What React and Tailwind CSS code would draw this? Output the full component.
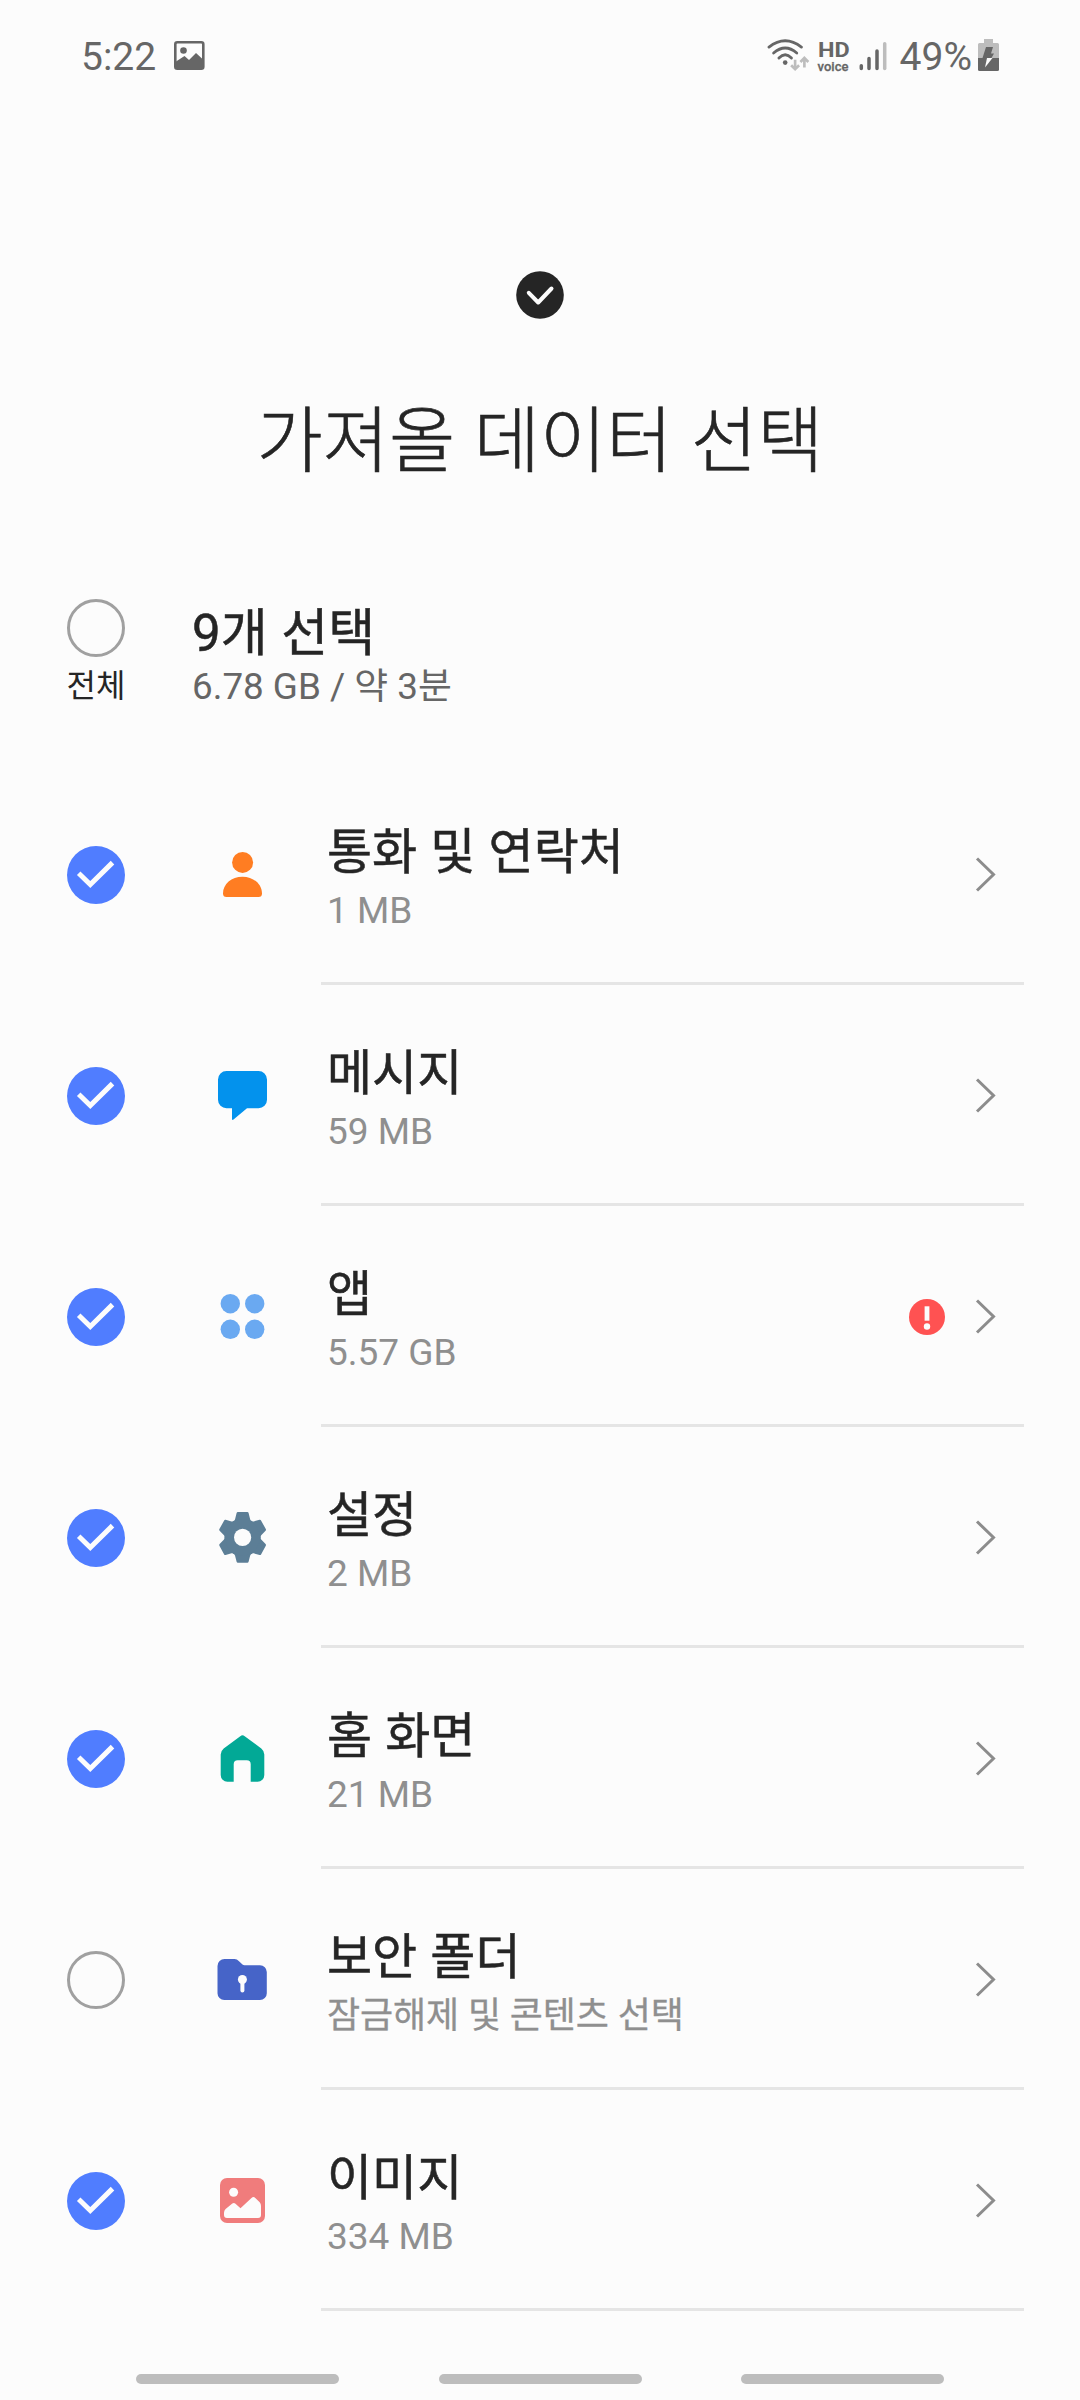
import React from 'react';

const PersonIcon = () => (
  <svg viewBox="0 0 60 60" className="w-[60px] h-[60px]" fill="#ff7d22">
    <circle cx="30.6" cy="17.4" r="10.5" />
    <path d="M11 48.5C11 39 19.5 31.7 30.5 31.7S50 39 50 48.5A3.5 3.5 0 0 1 46.5 52h-32a3.5 3.5 0 0 1-3.5-3.5z" />
  </svg>
);

const MessageIcon = () => (
  <svg viewBox="0 0 60 60" className="w-[60px] h-[60px]" fill="#0392ed">
    <path d="M14.5 5h32a8.5 8.5 0 0 1 8.5 8.5v20.3a8.5 8.5 0 0 1-8.5 8.5H35L21.5 53.6Q20 54.6 20 53V42.3h-5.5A8.5 8.5 0 0 1 6 33.8V13.5A8.5 8.5 0 0 1 14.5 5z" />
  </svg>
);

const AppsIcon = () => (
  <svg viewBox="0 0 60 60" className="w-[60px] h-[60px]" fill="#6aa9f1">
    <circle cx="18.3" cy="16.7" r="9.7" />
    <circle cx="42.7" cy="16.7" r="9.7" />
    <circle cx="18.3" cy="42.3" r="9.7" />
    <circle cx="42.7" cy="42.3" r="9.7" />
  </svg>
);

const GearIcon = () => (
  <svg viewBox="0 0 60 60" className="w-[60px] h-[60px]" fill="#5c7e96">
    <g transform="translate(30.6 29.4) scale(0.95 1)">
      {[0, 60, 120, 180, 240, 300].map((angle) => (
        <path
          key={angle}
          transform={`rotate(${angle})`}
          d="M-5-25.3H5Q6-25.3 6.3-24.3L8-18Q8.6-16.6 10.2-16L6-8H-6L-10.2-16Q-8.6-16.6-8-18L-6.3-24.3Q-6-25.3-5-25.3z"
        />
      ))}
      <circle r="18.3" />
    </g>
    <circle cx="30.6" cy="29.4" r="8.6" fill="#fcfcfc" />
  </svg>
);

const HomeIcon = () => (
  <svg viewBox="0 0 60 60" className="w-[60px] h-[60px]" fill="#02a996">
    <path d="M28.3 7.2Q30.5 5.2 32.7 7.2L49.3 19.5Q52.3 22 52.3 25.5V46a6.7 6.7 0 0 1-6.7 6.7H38.7V35.3a4 4 0 0 0-4-4h-9a4 4 0 0 0-4 4V52.7H15.4A6.7 6.7 0 0 1 8.7 46V25.5Q8.7 22 11.7 19.5z" />
  </svg>
);

const FolderIcon = () => (
  <svg viewBox="0 0 60 60" className="w-[60px] h-[60px]">
    <path
      fill="#4664c8"
      d="M12.5 9h10Q25 9 27 11.2L30.5 14.6Q31.3 15.3 32.5 15.3H48a6.8 6.8 0 0 1 6.8 6.8V43.2A6.8 6.8 0 0 1 48 50H12.3A6.8 6.8 0 0 1 5.5 43.2V16a7 7 0 0 1 7-7z"
    />
    <circle cx="30.4" cy="29.5" r="4.5" fill="#fcfcfc" />
    <path d="M30.4 30v10.5" stroke="#fcfcfc" strokeWidth="4" strokeLinecap="round" />
  </svg>
);

const ImageIcon = () => (
  <svg viewBox="0 0 60 60" className="w-[60px] h-[60px]">
    <rect x="8" y="7" width="45" height="45" rx="7" fill="#f07c7c" />
    <circle cx="21.6" cy="21.3" r="4.5" fill="#fcfcfc" />
    <path
      fill="#fcfcfc"
      d="M12 42Q12 39.5 13.6 38L20.3 32.5Q22 31.2 23.5 32.8L28.5 37.3 39.5 27Q41.5 25.2 43.3 27L47.7 31.3Q49 32.8 49 35V44a3 3 0 0 1-3 3H15a3 3 0 0 1-3-3z"
    />
  </svg>
);

const items = [
  { title: '통화 및 연락처', detail: '1 MB', Icon: PersonIcon, checked: true },
  { title: '메시지', detail: '59 MB', Icon: MessageIcon, checked: true },
  { title: '앱', detail: '5.57 GB', Icon: AppsIcon, checked: true, alert: true },
  { title: '설정', detail: '2 MB', Icon: GearIcon, checked: true },
  { title: '홈 화면', detail: '21 MB', Icon: HomeIcon, checked: true },
  { title: '보안 폴더', detail: '잠금해제 및 콘텐츠 선택', Icon: FolderIcon, checked: false, locked: true },
  { title: '이미지', detail: '334 MB', Icon: ImageIcon, checked: true },
];

const Checkbox = ({ checked }) => {
  if (!checked) {
    return <div className="w-[58px] h-[58px] shrink-0 rounded-full border-3 border-[#a0a0a0]" />;
  }

  return (
    <svg viewBox="0 0 58 58" className="w-[58px] h-[58px] shrink-0">
      <circle cx="29" cy="29" r="29" fill="#507dff" />
      <path d="M11.7 27.3l11.6 11.3L45.5 16.6" fill="none" stroke="#fcfcfc" strokeWidth="5" />
    </svg>
  );
};

const AlertIcon = () => (
  <svg viewBox="0 0 36 36" className="w-9 h-9">
    <circle cx="18" cy="18" r="18" fill="#ff5252" />
    <path d="M15.6 7.3h4.8v14.4h-4.8z" fill="#fcfcfc" />
    <circle cx="18" cy="27.5" r="3.2" fill="#fcfcfc" />
  </svg>
);

const Chevron = () => (
  <svg viewBox="0 0 22 36" className="w-[22px] h-9" fill="none" stroke="#8c8c8c" strokeWidth="3">
    <path d="M2 1.5L18.5 17.5 2 33.5" />
  </svg>
);

const StatusBar = () => (
  <header className="h-[112px] shrink-0 flex items-start pl-[81px] pr-[81px] pt-[34px] text-[#666666]">
    <span className="text-[39px] leading-[46px]">5:22</span>
    <svg viewBox="0 0 31 29" className="w-[31px] h-[29px] ml-[18px] mt-[7px]">
      <rect x="1.3" y="1.3" width="28" height="26.4" rx="2" fill="none" stroke="#666666" strokeWidth="2.6" />
      <circle cx="9.5" cy="9.5" r="3.3" fill="#666666" />
      <path d="M2 20.5L10.5 15l4.5 4L22 12l7 6.5V27H2z" fill="#666666" />
    </svg>

    <div className="ml-auto flex items-start">
      <svg viewBox="48 50 136 105" className="w-[45px] h-[35px] mt-[3px]" fill="none">
        <g stroke="#666666" strokeWidth="8.5" strokeLinecap="round">
          <path d="M57 80Q106 42 155 80" />
          <path d="M71 98Q106 68 141 98" />
          <path d="M87 113Q106 94 125 113" />
        </g>
        <circle cx="106" cy="127" r="7" fill="#666666" />
        <g stroke="#bdbdbd" strokeWidth="8">
          <path d="M136 118v29M124 135l12 12 12-12" />
          <path d="M164 142v-29M152 125l12-12 12 12" />
        </g>
      </svg>
      <div className="w-8 ml-[7px] mt-[6px] flex flex-col items-start">
        <span className="text-[20px] leading-[20px] font-bold origin-left scale-x-[1.17]">HD</span>
        <span className="text-[13px] leading-[13px] font-medium [-webkit-text-stroke:0.3px_#666666]">voice</span>
      </div>
      <svg viewBox="0 0 28 30" className="w-7 h-[30px] ml-[9px] mt-[7px]" strokeWidth="3.5" strokeLinecap="round">
        <path d="M2.3 24.8v2.7M10 17.5v10M18 10v17.5" stroke="#666666" />
        <path d="M25.7 2.8v24.7" stroke="#bdbdbd" />
      </svg>
      <span className="text-[39px] leading-[46px] ml-[13px]">49%</span>
      <svg viewBox="0 0 21 32" className="w-[21px] h-8 ml-[6px] mt-[5px]">
        <path d="M6 0h9v4h4.5Q21 4 21 5.5V19H0V5.5Q0 4 1.5 4H6z" fill="#bdbdbd" />
        <path d="M0 19h21v11.5q0 1.5-1.5 1.5h-18Q0 32 0 30.5z" fill="#666666" />
        <path d="M8 8h7l-2 6.5h3L13.5 19H4.5z" fill="#666666" />
        <path d="M9 19h5.5L7 28.5z" fill="#fcfcfc" />
      </svg>
    </div>
  </header>
);

const ItemRow = ({ item }) => {
  const { title, detail, Icon, checked, alert, locked } = item;

  return (
    <li className="h-[221px] flex items-start pl-[67px] pr-14">
      <div className="mt-[82px]">
        <Checkbox checked={checked} />
      </div>
      <div className="ml-[87px] mt-[81px] shrink-0">
        <Icon />
      </div>
      <div className="ml-[49px] flex-1 h-full flex items-start border-b-[3px] border-[#e5e5e5] pl-[6px] pr-[27px]">
        <div className="flex-1 pt-[61px]">
          <h2 className="text-[49px] leading-[56px] [word-spacing:1px] [-webkit-text-stroke:0.5px_#252525] text-[#252525]">
            {title}
          </h2>
          <p
            className={
              locked
                ? 'mt-[8px] text-[36px] leading-[44px] tracking-[-0.1px] [-webkit-text-stroke:0.3px_#8f8f8f] text-[#8f8f8f]'
                : 'mt-[8px] text-[37px] leading-[44px] text-[#8f8f8f]'
            }
          >
            {detail}
          </p>
        </div>
        <div className="flex items-center gap-[30px] mt-[93px]">
          {alert && <AlertIcon />}
          <Chevron />
        </div>
      </div>
    </li>
  );
};

const App = () => {
  return (
    <div className="w-[1080px] h-[2400px] overflow-hidden flex flex-col bg-[#fcfcfc] font-['Roboto','Noto_Sans_CJK_KR',sans-serif]">
      <StatusBar />

      <div className="h-[487px] shrink-0 flex flex-col items-center pt-[159px]">
        <svg viewBox="0 0 48 48" className="w-12 h-12">
          <circle cx="24" cy="24" r="23.8" fill="#252525" />
          <path
            d="M12.8 21.8l9.4 9.7 13.3-14"
            fill="none"
            stroke="#fcfcfc"
            strokeWidth="4"
            strokeLinecap="round"
            strokeLinejoin="round"
          />
        </svg>
        <h1 className="mt-[75px] text-[72px] leading-[96px] font-light [word-spacing:1px] [-webkit-text-stroke:0.6px_#252525] text-[#252525]">
          가져올 데이터 선택
        </h1>
      </div>

      <div className="h-[165px] shrink-0 flex items-start pl-[66px]">
        <div className="w-[60px] flex flex-col items-center">
          <Checkbox checked={false} />
          <span className="mt-[11px] text-[32px] leading-[36px] text-[#252525] whitespace-nowrap">전체</span>
        </div>
        <div className="ml-[66px] pt-[5px]">
          <p className="text-[51px] leading-[60px] [word-spacing:1px] [-webkit-text-stroke:0.5px_#252525] text-[#252525]">
            9개 선택
          </p>
          <p className="mt-[1px] text-[36.8px] leading-[44px] text-[#666666]">6.78 GB / 약 3분</p>
        </div>
      </div>

      <ul className="shrink-0">
        {items.map((item) => (
          <ItemRow key={item.title} item={item} />
        ))}
      </ul>

      <nav className="flex pl-[136px] gap-[99.5px] pt-[63px]">
        <div className="w-[203px] h-[10px] shrink-0 rounded-full bg-[#bdbdbd]" />
        <div className="w-[203px] h-[10px] shrink-0 rounded-full bg-[#bdbdbd]" />
        <div className="w-[203px] h-[10px] shrink-0 rounded-full bg-[#bdbdbd]" />
      </nav>
    </div>
  );
};

export default App;
